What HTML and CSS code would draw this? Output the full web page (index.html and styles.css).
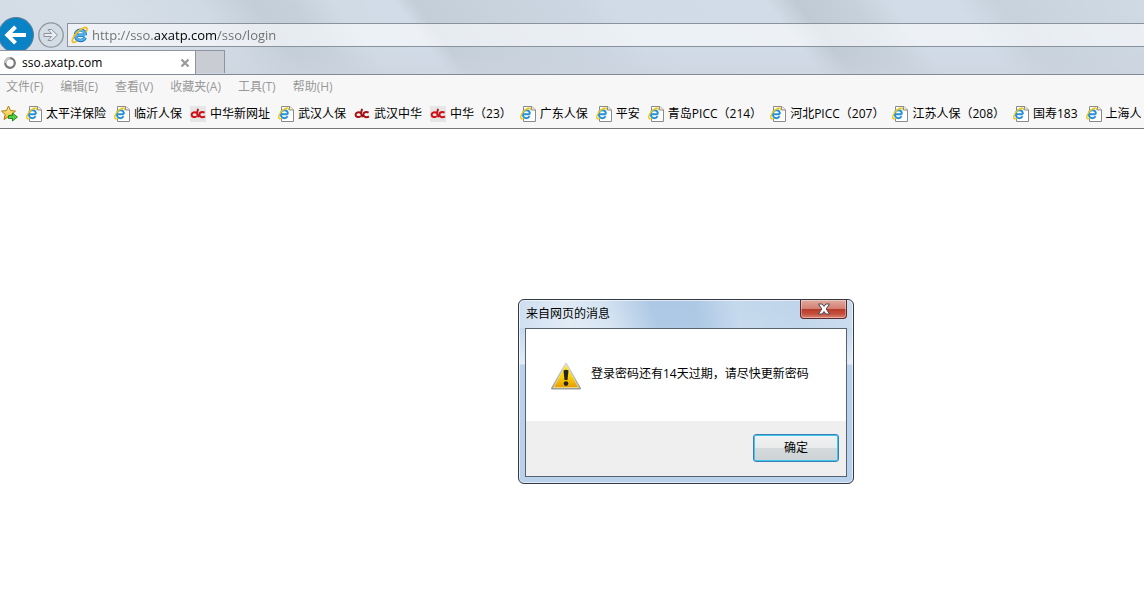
FILE: index.html
```html
<!DOCTYPE html>
<html lang="zh-CN">
<head>
    <meta charset="UTF-8">
    <meta name="viewport" content="width=device-width, initial-scale=1.0">
    <title>sso.axatp.com</title>
    <link rel="stylesheet" href="styles.css">
</head>
<body>
    <svg class="sprite" aria-hidden="true">
        <defs>
            <linearGradient id="gold" x1="0" y1="0" x2="0" y2="1">
                <stop offset="0" stop-color="#fff6a0"/>
                <stop offset="1" stop-color="#f0b428"/>
            </linearGradient>
            <linearGradient id="warn" x1="0" y1="0" x2="0" y2="1">
                <stop offset="0" stop-color="#ffee20"/>
                <stop offset="0.5" stop-color="#fbd408"/>
                <stop offset="1" stop-color="#e59c08"/>
            </linearGradient>
            <linearGradient id="rim" x1="0" y1="0" x2="0" y2="1">
                <stop offset="0" stop-color="#d8d8d8"/>
                <stop offset="1" stop-color="#9c9c9c"/>
            </linearGradient>
        </defs>
        <symbol id="ie-page" viewBox="0 0 16 16">
            <path d="M3.500 0.500h8.500l3.500 3.500v11.500h-12z" fill="#fff" stroke="#8a8a8a"/>
            <path d="M11.500 0.500v3.500h4" fill="#eee" stroke="#8a8a8a"/>
            <path d="M3 8.200h6.800M9.600 10.300c-.8 1.300-1.900 1.900-3.200 1.900-2.200 0-3.500-1.700-3.500-4s1.400-3.900 3.600-3.900c2.200 0 3.400 1.500 3.400 3.900" fill="none" stroke="#2490d8" stroke-width="1.900"/>
            <path d="M10.500 4.200c.6-1.900-.6-2.700-3-1.700C4 4 .8 8.500.7 11.200c0 1.900 1.300 2 3.200 1" fill="none" stroke="#ecc81c" stroke-width="1.400"/>
        </symbol>
        <symbol id="ie" viewBox="0 0 18 18">
            <path d="M5 9.300h8.500M14.200 11.600c-.9 1.900-2.500 2.900-4.700 2.900-3 0-5-2.200-5-5.200s2.100-5.200 5-5.200c3 0 4.900 2 4.900 5.200" fill="none" stroke="#1d74bc" stroke-width="3.400"/>
            <path d="M5 9.300h9M13.800 11.800c-.9 1.700-2.400 2.400-4.300 2.400-2.800 0-4.700-2.100-4.700-4.900s2-4.900 4.700-4.900c2.800 0 4.600 1.900 4.600 4.900" fill="none" stroke="#53b5ec" stroke-width="2"/>
            <path d="M15 5.800c2-3.600.8-5.500-2.800-3.800C7.500 4 2.200 9.600 1.300 14.200c-.3 2.500 1.700 2.700 4.500 1.100" fill="none" stroke="#f2bd22" stroke-width="1.800"/>
        </symbol>
        <symbol id="cc" viewBox="0 0 16 16">
            <path d="M6.700 6.900C4.800 5.600 1.600 6.400 1.600 8.700c0 2.500 3.200 3 5.200 1.500M8.100 2.800c-.9 2.600-1.400 6.600.7 8M14.600 6.600C12 5.200 9.400 6.500 9.400 8.600c0 2.600 3.300 3.200 5.600 1.700" fill="none" stroke="currentColor" stroke-width="2"/>
        </symbol>
    </svg>

    <header class="chrome">
        <div class="glass">
            <div class="nav-row">
                <button class="back" type="button" aria-label="后退">
                    <svg width="36" height="36" viewBox="0 0 36 36">
                        <circle cx="18" cy="18" r="17.500" fill="#0a83c6" stroke="#5d7c93"/>
                        <path d="M28 18H10M17.500 9.800L9.300 18l8.200 8.200" fill="none" stroke="#fff" stroke-width="4"/>
                    </svg>
                </button>
                <button class="forward" type="button" aria-label="前进">
                    <svg width="26" height="26" viewBox="0 0 26 26">
                        <circle cx="13" cy="13" r="12.200" fill="#d3dbe5" stroke="#8e959e" stroke-width="1.300"/>
                        <path d="M6 11.500h7.500L10 7.500h3.500L19.500 13l-6 5.500H10l3.500-4H6z" fill="#e8edf3" stroke="#8a929d"/>
                    </svg>
                </button>
                <div class="address">
                    <svg width="18" height="18" aria-hidden="true"><use href="#ie"/></svg>
                    <input class="url" type="text" aria-label="地址" value="http://sso.axatp.com/sso/login">
                </div>
            </div>
            <div class="tabs">
                <div class="tab">
                    <svg width="14" height="14" viewBox="0 0 14 14" aria-hidden="true">
                        <circle cx="7" cy="7" r="4.800" fill="none" stroke="#777" stroke-width="2.200"/>
                        <path d="M2.200 7A4.800 4.800 0 0 1 7 2.200" fill="none" stroke="#c4c4c4" stroke-width="2.400"/>
                    </svg>
                    <span class="tab-title">sso.axatp.com</span>
                    <button class="tab-close" type="button" aria-label="关闭选项卡">
                        <svg width="10" height="10" viewBox="0 0 10 10"><path d="M1.500 1.500l7 7M8.500 1.500l-7 7" stroke="#999" stroke-width="2.200"/></svg>
                    </button>
                </div>
                <button class="new-tab" type="button" aria-label="新建选项卡"></button>
            </div>
        </div>

        <nav class="menu">
            <button type="button">文件(F)</button>
            <button type="button">编辑(E)</button>
            <button type="button">查看(V)</button>
            <button type="button">收藏夹(A)</button>
            <button type="button">工具(T)</button>
            <button type="button">帮助(H)</button>
        </nav>

        <nav class="favorites">
            <button class="add-fav" type="button" aria-label="添加到收藏夹栏">
                <svg width="17" height="17" viewBox="0 0 17 17">
                    <path d="M7.500 1l2 4.600 5 .5-3.700 3.400 1.200 5-4.500-2.700L3 14.500l1.200-5L.5 6.100l5-.5z" fill="url(#gold)" stroke="#ad7b17"/>
                    <path d="M7.500 10.500h4V8l5 4-5 4v-2.500h-4z" fill="#55cf42" stroke="#168323" stroke-width="0.900"/>
                </svg>
            </button>
            <a href="#"><svg class="ico"><use href="#ie-page"/></svg>太平洋保险</a>
            <a href="#"><svg class="ico"><use href="#ie-page"/></svg>临沂人保</a>
            <a href="#"><svg class="ico cc plate"><use href="#cc"/></svg>中华新网址</a>
            <a href="#"><svg class="ico"><use href="#ie-page"/></svg>武汉人保</a>
            <a href="#"><svg class="ico cc dark"><use href="#cc"/></svg>武汉中华</a>
            <a href="#"><svg class="ico cc plate"><use href="#cc"/></svg>中华（23）</a>
            <a href="#"><svg class="ico"><use href="#ie-page"/></svg>广东人保</a>
            <a href="#"><svg class="ico"><use href="#ie-page"/></svg>平安</a>
            <a href="#"><svg class="ico"><use href="#ie-page"/></svg>青岛PICC（214）</a>
            <a href="#"><svg class="ico"><use href="#ie-page"/></svg>河北PICC（207）</a>
            <a href="#"><svg class="ico"><use href="#ie-page"/></svg>江苏人保（208）</a>
            <a href="#"><svg class="ico"><use href="#ie-page"/></svg>国寿183</a>
            <a href="#"><svg class="ico"><use href="#ie-page"/></svg>上海人</a>
        </nav>
    </header>

    <div class="dialog" role="alertdialog" aria-labelledby="dlgTitle" aria-describedby="dlgText">
        <div class="dialog-bar">
            <span id="dlgTitle">来自网页的消息</span>
            <button class="dialog-close" type="button" aria-label="关闭">
                <svg width="14" height="12" viewBox="0 0 14 12"><path d="M1.500 1h3.500l2 2.500L9 1h3.500L9.200 6l3.300 5H9L7 8.500 5 11H1.500l3.300-5z" fill="#fff" stroke="#4f4954"/></svg>
            </button>
        </div>
        <div class="dialog-body">
            <div class="message">
                <svg width="32" height="30" viewBox="0 0 32 30" aria-hidden="true">
                    <path d="M16 2.500L30 27.500H2z" fill="url(#rim)" stroke="url(#rim)" stroke-width="2" stroke-linejoin="round"/>
                    <path d="M16 4L28.500 26.500h-25z" fill="url(#warn)" stroke="#f8e47c" stroke-width="0.800"/>
                    <path d="M13.500 9.500q2.500-1.500 5 0l-1 9.500h-3z" fill="#262419"/>
                    <circle cx="16" cy="22.600" r="2.300" fill="#262419"/>
                </svg>
                <span id="dlgText">登录密码还有14天过期，请尽快更新密码</span>
            </div>
            <div class="actions">
                <button class="ok" type="button">确定</button>
            </div>
        </div>
    </div>
</body>
</html>
```
FILE: styles.css
```css
* {
    box-sizing: border-box;
}
body {
    margin: 0;
    background: #fff;
    color: #000;
    font: 12px/16px "Open Sans", "Noto Sans CJK SC", sans-serif;
    overflow-x: hidden;
}
button {
    margin: 0;
    padding: 0;
    border: none;
    background: none;
    font: inherit;
}
svg {
    display: block;
    flex: none;
}
.sprite {
    position: absolute;
    width: 0;
    height: 0;
}

/* browser chrome */
.chrome {
    background: #f7f7f7;
    border-bottom: 1px solid #777;
    overflow: hidden;
}
.glass {
    border-bottom: 1px solid #818a99;
    background:
        linear-gradient(rgba(205, 211, 222, 0) 45px, rgba(205, 211, 222, 0.6) 74px),
        linear-gradient(53deg, #d3dbe5 0, #d6dfe8 120px, #d0dae4 200px, #c3ced9 245px, #c5d0db 275px, #d0dbe6 310px, #d1dce8 358px, #c3ced9 374px, #c8d3de 440px, #cbd6e2 500px, #d0dbe7 530px, #d1dce8 655px, #bfcad4 680px, #c6d1db 725px, #d1dce8 755px, #d1dce8 805px, #c7d2dd 840px, #cfdae5 960px);
}
.nav-row {
    display: flex;
    align-items: flex-start;
    height: 50px;
    padding-top: 17px;
    overflow: hidden;
}
.back {
    margin-left: -2px;
}
.forward {
    margin: 5px 3px 0 4px;
}
.address {
    flex: 1;
    display: flex;
    align-items: center;
    gap: 3px;
    height: 24px;
    margin-top: 6px;
    padding-left: 3px;
    border: 1px solid #8a929d;
    border-right: none;
    background: rgba(255, 255, 255, 0.6);
}
.url {
    flex: 1;
    min-width: 0;
    height: 22px;
    padding: 0;
    border: none;
    outline: none;
    font: 13px/22px "Open Sans", sans-serif;
    /* only the domain part is dark */
    color: transparent;
    background: linear-gradient(90deg, #6d6d6d 62px, #000 62px, #000 125px, #6d6d6d 125px);
    -webkit-background-clip: text;
    background-clip: text;
}
.tabs {
    display: flex;
    height: 24px;
}
.tab {
    display: flex;
    align-items: center;
    width: 196px;
    padding: 0 5px 0 3px;
    gap: 5px;
    background: #fff;
    border-top: 1px solid #8d949f;
    border-right: 1px solid #8d949f;
}
.tab-title {
    flex: 1;
}
.new-tab {
    width: 29px;
    height: 23px;
    background: #c9cdd3;
    border: 1px solid #8d949f;
    border-width: 1px 1px 0 0;
}
.menu {
    display: flex;
    gap: 17px;
    padding: 4px 6px;
}
.menu button {
    color: #999;
    white-space: nowrap;
}
.favorites {
    display: flex;
    align-items: center;
    gap: 8px;
    height: 29px;
    padding-left: 1px;
    white-space: nowrap;
}
.favorites a {
    display: flex;
    align-items: center;
    gap: 4px;
    color: #000;
    text-decoration: none;
}
.ico {
    width: 16px;
    height: 16px;
}
.cc {
    color: #cc1218;
}
.plate {
    background: #e6e6e6;
}
.dark {
    color: #a51015;
}

/* message box */
.dialog {
    position: absolute;
    left: 518px;
    top: 299px;
    width: 336px;
    padding: 0 6px 6px;
    border: 1px solid #333a44;
    border-radius: 6px;
    background:
        linear-gradient(75deg, rgba(255, 255, 255, 0.2), rgba(255, 255, 255, 0.5) 50px, rgba(255, 255, 255, 0.3) 90px, rgba(165, 195, 226, 0.7) 135px, rgba(165, 195, 226, 0.7) 175px, rgba(200, 219, 238, 0.6) 215px, rgba(190, 212, 234, 0.3) 270px, rgba(215, 229, 243, 0.4)) 0 0 / 100% 28px no-repeat,
        linear-gradient(#bfd4ea, #c5d9ed 28px, #e3edf7 64px, #b9d1ea 65px, #b9d1ea);
    box-shadow: inset 0 0 0 1px rgba(255, 255, 255, 0.6);
}
.dialog-bar {
    display: flex;
    justify-content: space-between;
    height: 28px;
    padding-left: 1px;
    line-height: 27px;
}
.dialog-close {
    display: flex;
    align-items: center;
    justify-content: center;
    width: 47px;
    height: 19px;
    border: 1px solid #5a2a2c;
    border-top: none;
    border-radius: 0 0 4px 4px;
    background: linear-gradient(#e3aaa0, #d27e70 9px, #b73a28 9px, #c3503c 14px, #dc8672);
    box-shadow: inset 0 0 0 1px rgba(255, 255, 255, 0.35);
}
.dialog-body {
    border: 1px solid #57636f;
    background: #fff;
}
.message {
    display: flex;
    align-items: center;
    gap: 9px;
    height: 92px;
    padding: 0 0 2px 24px;
}
.message svg {
    margin-top: 4px;
}
.actions {
    display: flex;
    justify-content: flex-end;
    padding: 13px 7px 14px;
    background: #efefef;
}
.ok {
    width: 86px;
    height: 28px;
    border: 1px solid #3c7fb1;
    border-radius: 3px;
    background: linear-gradient(#f2f2f2, #e8eaeb 13px, #d5dadc 13px, #cdd2d4);
    box-shadow: inset 0 0 0 1px #3cc8f2;
}
```
